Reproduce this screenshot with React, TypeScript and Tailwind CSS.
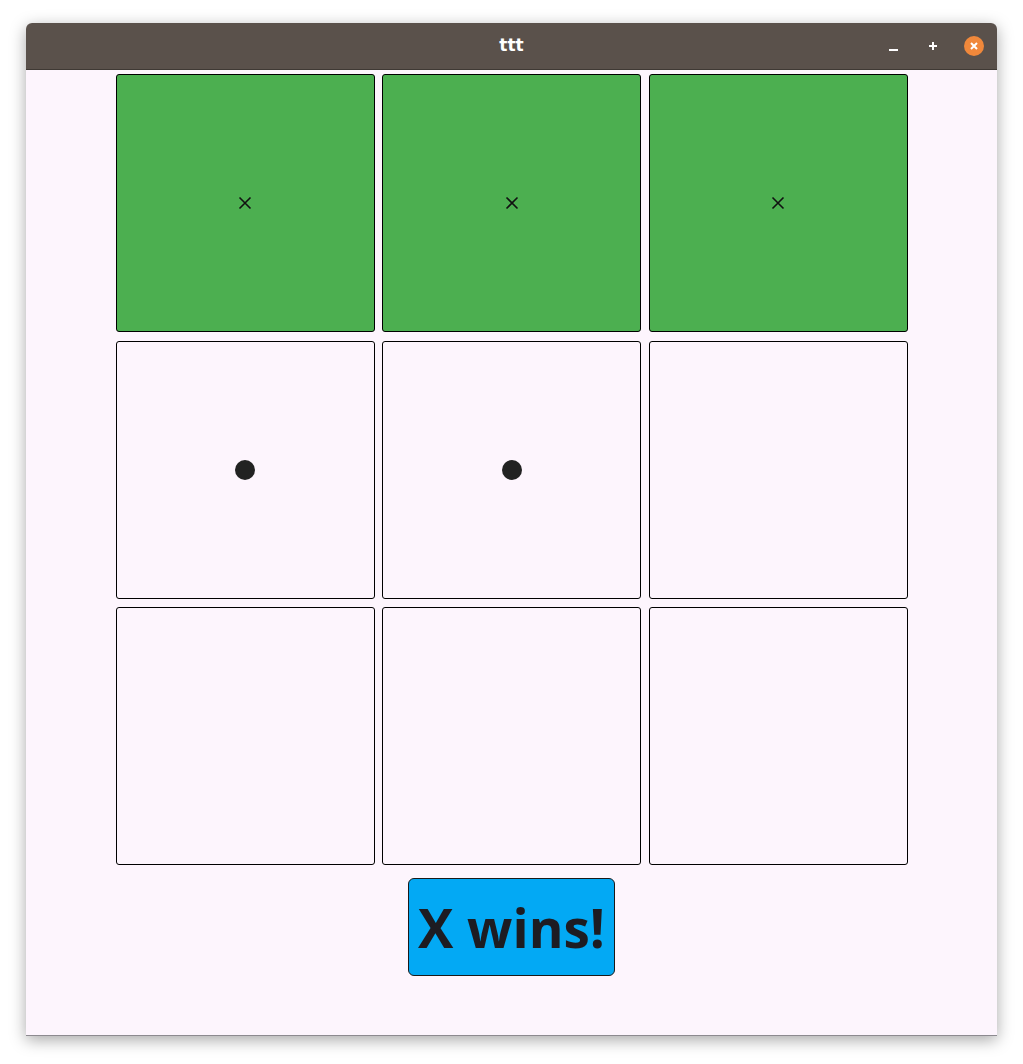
import { useState } from 'react'

type Mark = 'x' | 'o' | null

const initialBoard: Mark[] = ['x', 'x', 'x', 'o', 'o', null, null, null, null]
const winLine = [0, 1, 2]

function Cell({ mark, win }: { mark: Mark; win: boolean }) {
  return (
    <div
      className={`flex items-center justify-center rounded-[3px] border border-black ${
        win ? 'bg-[#4caf50]' : 'bg-[#fdf5fd]'
      }`}
    >
      {mark === 'x' && (
        <svg width="14" height="14" viewBox="0 0 14 14">
          <path d="M1.5 1.5 L12.5 12.5 M12.5 1.5 L1.5 12.5" stroke="#111" strokeWidth="1.6" />
        </svg>
      )}
      {mark === 'o' && <div className="h-5 w-5 rounded-full bg-[#222222]" />}
    </div>
  )
}

export default function App() {
  const [board] = useState<Mark[]>(initialBoard)

  return (
    <div className="h-[1064px] w-[1023px] bg-white pl-[26px] pt-[23px]" style={{ fontFamily: '"Open Sans", "Noto Sans", sans-serif' }}>
      <div className="flex h-[1013px] w-[971px] flex-col overflow-hidden rounded-t-[6px] border-b border-[#8d8a90] shadow-[0_4px_16px_rgba(0,0,0,0.35)]">
        <div className="relative flex h-[47px] shrink-0 items-center justify-center bg-[#5a514b] border-b border-[#3f3934]">
          <span className="text-[17px] font-bold text-white" style={{ fontFamily: '"DejaVu Sans", sans-serif' }}>ttt</span>
          <div className="absolute right-[13px] top-[13px] flex items-center">
            <div className="mt-[7px] h-[2px] w-[9px] bg-white" />
            <svg className="ml-[30px]" width="10" height="10" viewBox="0 0 10 10">
              <path d="M5 1 V9 M1 5 H9" stroke="white" strokeWidth="2" />
            </svg>
            <div className="ml-[26px] flex h-[20px] w-[20px] items-center justify-center rounded-full bg-[#f0883b]">
              <svg width="10" height="10" viewBox="0 0 10 10">
                <path d="M2 2 L8 8 M8 2 L2 8" stroke="white" strokeWidth="2" />
              </svg>
            </div>
          </div>
        </div>
        <div className="flex flex-1 flex-col items-center bg-[#fdf5fd] pt-[4px]">
          <div className="grid h-[791px] w-[792px] grid-cols-3 grid-rows-3 gap-x-[7.5px] gap-y-[8.5px]">
            {board.map((m, i) => (
              <Cell key={i} mark={m} win={winLine.includes(i)} />
            ))}
          </div>
          <button className="mt-[13px] flex h-[98px] w-[207px] items-center justify-center rounded-[6px] border border-[#1a1a1a] bg-[#03a9f4] text-[53px] font-bold leading-none text-[#1d1c22]">
            X wins!
          </button>
        </div>
      </div>
    </div>
  )
}
